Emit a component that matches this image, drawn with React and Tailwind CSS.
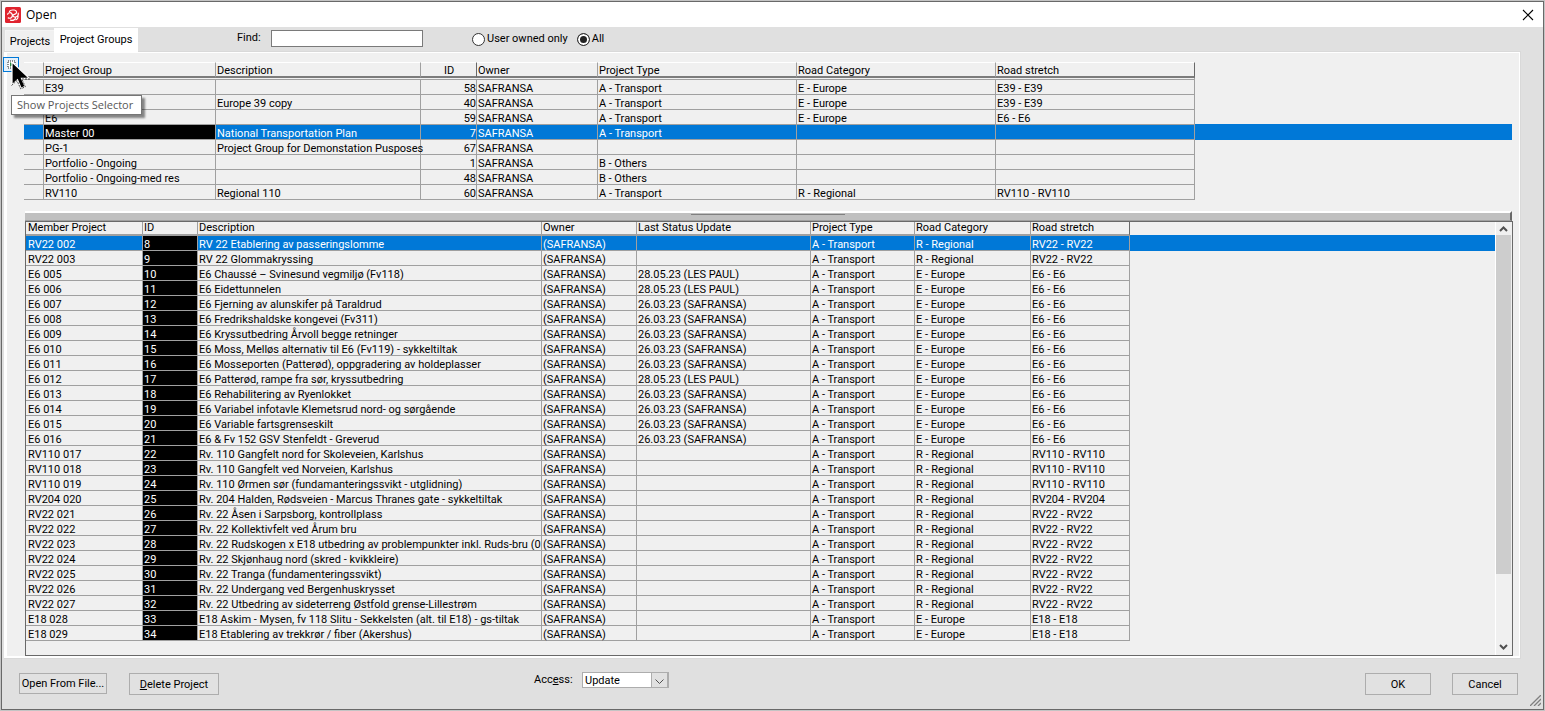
import React, { useState } from 'react';

const groups = [
    { name: 'E39', description: '', id: 58, type: 'A - Transport', category: 'E - Europe', stretch: 'E39 - E39' },
    { name: 'E39 copy', description: 'Europe 39 copy', id: 40, type: 'A - Transport', category: 'E - Europe', stretch: 'E39 - E39' },
    { name: 'E6', description: '', id: 59, type: 'A - Transport', category: 'E - Europe', stretch: 'E6 - E6' },
    { name: 'Master 00', description: 'National Transportation Plan', id: 7, type: 'A - Transport', category: '', stretch: '' },
    { name: 'PG-1', description: 'Project Group for Demonstation Pusposes', id: 67, type: '', category: '', stretch: '' },
    { name: 'Portfolio - Ongoing', description: '', id: 1, type: 'B - Others', category: '', stretch: '' },
    { name: 'Portfolio - Ongoing-med res', description: '', id: 48, type: 'B - Others', category: '', stretch: '' },
    { name: 'RV110', description: 'Regional 110', id: 60, type: 'A - Transport', category: 'R - Regional', stretch: 'RV110 - RV110' },
];

const R = 'R - Regional';
const E = 'E - Europe';

// name, id, description, last status update, road category, road stretch
const projects = [
    ['RV22 002', 8, 'RV 22 Etablering av passeringslomme', '', R, 'RV22 - RV22'],
    ['RV22 003', 9, 'RV 22 Glommakryssing', '', R, 'RV22 - RV22'],
    ['E6 005', 10, 'E6 Chaussé – Svinesund vegmiljø (Fv118)', '28.05.23 (LES PAUL)', E, 'E6 - E6'],
    ['E6 006', 11, 'E6 Eidettunnelen', '28.05.23 (LES PAUL)', E, 'E6 - E6'],
    ['E6 007', 12, 'E6 Fjerning av alunskifer på Taraldrud', '26.03.23 (SAFRANSA)', E, 'E6 - E6'],
    ['E6 008', 13, 'E6 Fredrikshaldske kongevei (Fv311)', '26.03.23 (SAFRANSA)', E, 'E6 - E6'],
    ['E6 009', 14, 'E6 Kryssutbedring Årvoll begge retninger', '26.03.23 (SAFRANSA)', E, 'E6 - E6'],
    ['E6 010', 15, 'E6 Moss, Melløs alternativ til E6 (Fv119) - sykkeltiltak', '26.03.23 (SAFRANSA)', E, 'E6 - E6'],
    ['E6 011', 16, 'E6 Mosseporten (Patterød), oppgradering av holdeplasser', '26.03.23 (SAFRANSA)', E, 'E6 - E6'],
    ['E6 012', 17, 'E6 Patterød, rampe fra sør, kryssutbedring', '28.05.23 (LES PAUL)', E, 'E6 - E6'],
    ['E6 013', 18, 'E6 Rehabilitering av Ryenlokket', '26.03.23 (SAFRANSA)', E, 'E6 - E6'],
    ['E6 014', 19, 'E6 Variabel infotavle Klemetsrud nord- og sørgående', '26.03.23 (SAFRANSA)', E, 'E6 - E6'],
    ['E6 015', 20, 'E6 Variable fartsgrenseskilt', '26.03.23 (SAFRANSA)', E, 'E6 - E6'],
    ['E6 016', 21, 'E6 & Fv 152 GSV Stenfeldt - Greverud', '26.03.23 (SAFRANSA)', E, 'E6 - E6'],
    ['RV110 017', 22, 'Rv. 110 Gangfelt nord for Skoleveien, Karlshus', '', R, 'RV110 - RV110'],
    ['RV110 018', 23, 'Rv. 110 Gangfelt ved Norveien, Karlshus', '', R, 'RV110 - RV110'],
    ['RV110 019', 24, 'Rv. 110 Ørmen sør (fundamanteringssvikt - utglidning)', '', R, 'RV110 - RV110'],
    ['RV204 020', 25, 'Rv. 204 Halden, Rødsveien - Marcus Thranes gate - sykkeltiltak', '', R, 'RV204 - RV204'],
    ['RV22 021', 26, 'Rv. 22 Åsen i Sarpsborg, kontrollplass', '', R, 'RV22 - RV22'],
    ['RV22 022', 27, 'Rv. 22 Kollektivfelt ved Årum bru', '', R, 'RV22 - RV22'],
    ['RV22 023', 28, 'Rv. 22 Rudskogen x E18 utbedring av problempunkter inkl. Ruds-bru (01', '', R, 'RV22 - RV22'],
    ['RV22 024', 29, 'Rv. 22 Skjønhaug nord (skred - kvikkleire)', '', R, 'RV22 - RV22'],
    ['RV22 025', 30, 'Rv. 22 Tranga (fundamenteringssvikt)', '', R, 'RV22 - RV22'],
    ['RV22 026', 31, 'Rv. 22 Undergang ved Bergenhuskrysset', '', R, 'RV22 - RV22'],
    ['RV22 027', 32, 'Rv. 22 Utbedring av sideterreng Østfold grense-Lillestrøm', '', R, 'RV22 - RV22'],
    ['E18 028', 33, 'E18 Askim - Mysen, fv 118 Slitu - Sekkelsten (alt. til E18) - gs-tiltak', '', E, 'E18 - E18'],
    ['E18 029', 34, 'E18 Etablering av trekkrør / fiber (Akershus)', '', E, 'E18 - E18'],
];

const cellBase = 'h-[15px] py-0 pt-[3px] pr-0 leading-[11px] border-r border-b border-[#a0a0a0] whitespace-nowrap';
const cell = `${cellBase} pl-px`;
const nameCell = `${cellBase} pl-[2px]`;
const groupHead = 'h-4 pt-[2px] pb-0 pr-0 pl-px font-normal leading-[11px] border-t border-t-white border-b-2 border-b-[#7c7c7c] border-r';
const memberHead = 'h-[14px] py-0 pr-0 font-normal text-left leading-[12px] border-b-2 border-b-[#a0a0a0] border-r';
const button = 'border border-[#adadad] bg-[#e1e1e1] text-center leading-none';

const Logo = () => (
    <svg className="w-4 h-4" viewBox="0 0 16 16" aria-hidden="true">
        <rect width="16" height="16" rx="1.5" fill="#e0242f" />
        <g fill="none" stroke="#fff" strokeWidth="1.2" strokeLinecap="round" strokeLinejoin="round">
            <path d="M4.500 4.400C5.200 3.300 6.300 3 7.500 3h1.800c2.700.2 3 3.300.8 4.100L7.800 8" />
            <path d="M2.600 7.200c.7-1.800 3.300-2 4.300-.4.800 1.400.6 2.800-.4 3.700-1.100.9-2.300.9-3.300.4" />
            <path d="M7.800 8c.3 1.500 1.500 2.300 2.900 2 2.100-.4 2.900-2 2.500-4M5.500 13.200c2.800.6 5-.4 5.200-3.200M13.200 9.500c-.1 1.600-.9 2.700-2.200 3.300" />
        </g>
    </svg>
);

const Cursor = () => (
    <svg className="absolute left-1 top-[9px] z-20 w-5 h-7" viewBox="0 0 20 28" aria-hidden="true">
        <path d="M1 0v23l5.500-5.200 3.600 8.400 4-1.800-3.600-8.100h7.800z" fill="#000" stroke="#fff" strokeWidth="1.2" />
        <path d="M.5 23.500 6 18.600l3.700 8.200 4.600-2-3.400-7.800h8" fill="none" stroke="#222" strokeWidth="0.8" strokeDasharray="2 1" />
    </svg>
);

const Chevron = ({ down, className }) => (
    <svg className={className} viewBox="0 0 9 6" aria-hidden="true">
        <path d={down ? 'M1 1l3.5 3.5L8 1' : 'M1 5l3.5-3.5L8 5'} fill="none" stroke="#505050" strokeWidth="2" />
    </svg>
);

const GroupTable = ({ selected, onSelect }) => (
    <table className="w-full table-fixed border-separate border-spacing-0">
        <colgroup>
            <col className="w-5" />
            <col className="w-[172px]" />
            <col className="w-[205px]" />
            <col className="w-14" />
            <col className="w-[121px]" />
            <col className="w-[199px]" />
            <col className="w-[199px]" />
            <col className="w-[199px]" />
            <col />
        </colgroup>
        <thead>
            <tr>
                <th className={`${groupHead} border-r-[#a0a0a0]`}></th>
                <th className={`${groupHead} text-left border-r-[#a0a0a0]`}>Project Group</th>
                <th className={`${groupHead} text-left border-r-[#a0a0a0]`}>Description</th>
                <th className={`${groupHead} text-center border-r-[#696969]`}>ID</th>
                <th className={`${groupHead} text-left border-r-[#a0a0a0]`}>Owner</th>
                <th className={`${groupHead} text-left border-r-[#a0a0a0]`}>Project Type</th>
                <th className={`${groupHead} text-left border-r-[#a0a0a0]`}>Road Category</th>
                <th className={`${groupHead} text-left border-r-[#696969]`}>Road stretch</th>
                <th></th>
            </tr>
            <tr>
                <td colSpan={8} className="h-[2px] p-0 border-b border-r border-[#a0a0a0]"></td>
                <td className="p-0"></td>
            </tr>
        </thead>
        <tbody>
            {groups.map(g => {
                const active = g.id === selected;
                return (
                    <tr key={g.id} onClick={() => onSelect(g.id)} className={active ? 'bg-[#0078d7] text-white' : ''}>
                        <td className={cell}></td>
                        <td className={active ? `${cell} bg-black` : cell}>{g.name}</td>
                        <td className={cell}>{g.description}</td>
                        <td className={`${cell} text-right`}>{g.id}</td>
                        <td className={cell}>SAFRANSA</td>
                        <td className={cell}>{g.type}</td>
                        <td className={cell}>{g.category}</td>
                        <td className={cell}>{g.stretch}</td>
                        <td className={active ? 'p-0 shadow-[0_-1px_0_#0078d7]' : 'p-0'}></td>
                    </tr>
                );
            })}
        </tbody>
    </table>
);

const MemberTable = ({ selected, onSelect }) => (
    <table className="w-full table-fixed border-separate border-spacing-0">
        <colgroup>
            <col className="w-[117px]" />
            <col className="w-[55px]" />
            <col className="w-[344px]" />
            <col className="w-[95px]" />
            <col className="w-[174px]" />
            <col className="w-[104px]" />
            <col className="w-[116px]" />
            <col className="w-[99px]" />
            <col />
        </colgroup>
        <thead>
            <tr>
                <th className={`${memberHead} pl-[2px] border-r-[#a0a0a0]`}>Member Project</th>
                <th className={`${memberHead} pl-px border-r-[#a0a0a0]`}>ID</th>
                <th className={`${memberHead} pl-px border-r-[#a0a0a0]`}>Description</th>
                <th className={`${memberHead} pl-px border-r-[#a0a0a0]`}>Owner</th>
                <th className={`${memberHead} pl-px border-r-[#a0a0a0]`}>Last Status Update</th>
                <th className={`${memberHead} pl-px border-r-[#a0a0a0]`}>Project Type</th>
                <th className={`${memberHead} pl-px border-r-[#a0a0a0]`}>Road Category</th>
                <th className={`${memberHead} pl-px border-r-[#696969]`}>Road stretch</th>
                <th></th>
            </tr>
        </thead>
        <tbody>
            {projects.map(([name, id, description, updated, category, stretch]) => {
                const active = id === selected;
                return (
                    <tr key={id} onClick={() => onSelect(id)} className={active ? 'bg-[#0078d7] text-white' : ''}>
                        <td className={nameCell}>{name}</td>
                        <td className={`${cell} bg-black text-white`}>{id}</td>
                        <td className={`${cell} overflow-hidden`}>{description}</td>
                        <td className={cell}>(SAFRANSA)</td>
                        <td className={cell}>{updated}</td>
                        <td className={cell}>A - Transport</td>
                        <td className={cell}>{category}</td>
                        <td className={cell}>{stretch}</td>
                        <td className={active ? 'p-0 shadow-[0_-1px_0_#0078d7]' : 'p-0'}></td>
                    </tr>
                );
            })}
        </tbody>
    </table>
);

const App = () => {
    const [tab, setTab] = useState('groups');
    const [find, setFind] = useState('');
    const [owned, setOwned] = useState('all');
    const [groupId, setGroupId] = useState(7);
    const [projectId, setProjectId] = useState(8);
    const [access, setAccess] = useState('Update');

    const radio = 'appearance-none w-[13px] h-[13px] rounded-full border border-[#333] bg-white checked:bg-[#222] checked:shadow-[inset_0_0_0_2px_#fff]';

    return (
        <div className="h-screen bg-[#c4c4c4] p-px font-['Roboto','Liberation_Sans',sans-serif] text-[11px] leading-[14px] text-black">
            <div className="h-full flex flex-col border border-[#696969] bg-[#e0e0e0]">
                {/* Title bar */}
                <header className="h-[25px] shrink-0 flex items-center bg-white pl-[3px] pr-2">
                    <Logo />
                    <h1 className="ml-[5px] flex-1 font-['Open_Sans','Noto_Sans',sans-serif] text-xs">Open</h1>
                    <button type="button" aria-label="Close" className="p-px">
                        <svg className="w-3 h-3" viewBox="0 0 12 12"><path d="M1 1l10 10M11 1L1 11" stroke="#000" strokeWidth="1.1" /></svg>
                    </button>
                </header>

                {/* Tabs and filter */}
                <div className="h-6 shrink-0 flex items-start pl-[3px]">
                    <div role="tablist" className="h-full flex items-end w-[232px]">
                        <button type="button" role="tab" aria-selected={tab === 'projects'} onClick={() => setTab('projects')} className="h-[21px] w-[49px] pt-px border-t border-l border-[#f4f4f4] bg-[#f0f0f0]">
                            Projects
                        </button>
                        <button type="button" role="tab" aria-selected={tab === 'groups'} onClick={() => setTab('groups')} className="relative z-10 h-6 -mb-px w-[84px] bg-white">
                            Project Groups
                        </button>
                    </div>
                    <label htmlFor="find" className="w-[34px] mt-1">Find:</label>
                    <input id="find" type="text" value={find} onChange={e => setFind(e.target.value)} className="mt-[3px] w-[152px] h-[17px] border border-[#7a7a7a] bg-white px-1 outline-none" />
                    <label className="mt-[5px] ml-[49px] flex items-center gap-[2px]">
                        <input type="radio" name="owned" className={radio} checked={owned === 'user'} onChange={() => setOwned('user')} />
                        User owned only
                    </label>
                    <label className="mt-[5px] ml-[9px] flex items-center gap-[2px]">
                        <input type="radio" name="owned" className={radio} checked={owned === 'all'} onChange={() => setOwned('all')} />
                        All
                    </label>
                </div>

                {/* Tab page */}
                <main className="flex-1 min-h-0 ml-[2px] mr-[22px] flex border-t border-r border-b border-[#d9d9d9]">
                    <div className="flex-1 min-w-0 flex border-t border-r border-b-2 border-l-[3px] border-white bg-[#f0f0f0] pr-[6px]">
                        <aside className="relative w-[17px] shrink-0 pt-1">
                            <button type="button" aria-describedby="selector-tip" aria-label="Show Projects Selector" className="-ml-1 flex items-center justify-center w-4 h-[15px] border border-[#0078d7] bg-[#e5f1fb]">
                                <svg className="w-[9px] h-[9px]" viewBox="0 0 9 9">
                                    <rect x="1" y="1" width="7" height="7" fill="#fff" stroke="#222" strokeDasharray="1 1" />
                                    <path d="M3 2v5l3-2.500z" fill="#2e8b45" />
                                </svg>
                            </button>
                            <Cursor />
                            <div id="selector-tip" role="tooltip" className="absolute left-1 top-[42px] z-10 h-5 pl-[5px] pr-2 border border-[#767676] bg-white shadow-[3px_3px_2px_rgba(0,0,0,0.45)] whitespace-nowrap font-['Open_Sans','Noto_Sans',sans-serif] text-[11px] leading-[18px] text-[#575757]">
                                Show Projects Selector
                            </div>
                        </aside>

                        <div className="flex-1 min-w-0 flex flex-col pt-[9px]">
                            <div className="pr-px">
                                <GroupTable selected={groupId} onSelect={setGroupId} />
                            </div>

                            <div role="separator" className="mt-[11px] ml-px mr-px h-[10px] shrink-0 flex justify-center border-t-2 border-b border-r-2 border-t-white border-b-[#a0a0a0] border-r-[#696969] bg-[#c0c0c0]">
                                <span className="mt-px w-[154px] h-px bg-[#808080]"></span>
                            </div>

                            <section className="flex-1 min-h-0 ml-px flex border border-[#696969]">
                                <div className="flex-1 min-w-0 overflow-hidden border-r border-white">
                                    <MemberTable selected={projectId} onSelect={setProjectId} />
                                </div>
                                <div className="w-4 flex flex-col items-center pr-px" aria-hidden="true">
                                    <div className="h-[13px] flex items-center"><Chevron className="w-[9px] h-[6px]" /></div>
                                    <div className="flex-1 w-full">
                                        <div className="h-[84%] w-full bg-[#cdcdcd]"></div>
                                    </div>
                                    <div className="h-[17px] flex items-center"><Chevron down className="w-[9px] h-[6px]" /></div>
                                </div>
                            </section>
                        </div>
                    </div>
                </main>

                {/* Actions */}
                <footer className="relative h-[50px] shrink-0 flex items-start pl-[17px] pr-[25px] pt-[14px]">
                    <button type="button" className={`${button} w-[88px] h-[21px]`}>Open From File...</button>
                    <button type="button" className={`${button} ml-[22px] w-[90px] h-[22px]`}><u>D</u>elete Project</button>
                    <div className="ml-[315px] -mt-px flex">
                        <label htmlFor="access" className="w-12 leading-4">Acc<u>e</u>ss:</label>
                        <div className="relative">
                            <select id="access" value={access} onChange={e => setAccess(e.target.value)} className="appearance-none w-[87px] h-4 border border-[#adadad] bg-white pl-[2px] leading-none outline-none">
                                <option>Update</option>
                                <option>Read</option>
                            </select>
                            <span className="absolute right-0 top-0 w-[18px] h-4 flex items-center justify-center border border-r-2 border-[#adadad] bg-[#e1e1e1] pointer-events-none">
                                <svg className="w-[9px] h-[6px] mt-1" viewBox="0 0 9 6"><path d="M.5.5l4 4 4-4" fill="none" stroke="#505050" /></svg>
                            </span>
                        </div>
                    </div>
                    <div className="ml-auto flex gap-[21px]">
                        <button type="button" className={`${button} w-[66px] h-[22px]`}>OK</button>
                        <button type="button" className={`${button} w-[66px] h-[22px]`}>Cancel</button>
                    </div>
                    <svg className="absolute right-[2px] bottom-[3px] w-[11px] h-[11px]" viewBox="0 0 11 11" aria-hidden="true">
                        <path d="M0 11L11 0M4 11l7-7M8 11l3-3" stroke="#808080" strokeWidth="1.3" />
                    </svg>
                </footer>
            </div>
        </div>
    );
};

export default App;
